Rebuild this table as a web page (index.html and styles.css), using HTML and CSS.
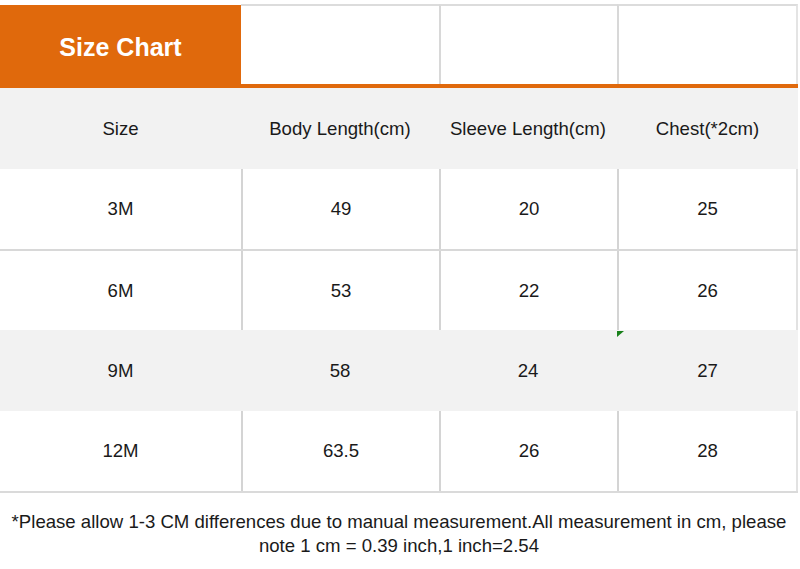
FILE: index.html
```html
<!DOCTYPE html>
<html>
<head>
<meta charset="utf-8">
<link rel="stylesheet" href="styles.css">
</head>
<body>
<div class="chart">
  <div class="row title-row">
    <div class="title">Size Chart</div>
    <div class="blank first"></div>
    <div class="blank"></div>
    <div class="blank last"></div>
  </div>
  <div class="row shade">
    <div class="cell">Size</div>
    <div class="cell">Body Length(cm)</div>
    <div class="cell">Sleeve Length(cm)</div>
    <div class="cell">Chest(*2cm)</div>
  </div>
  <div class="row plain">
    <div class="cell">3M</div>
    <div class="cell">49</div>
    <div class="cell">20</div>
    <div class="cell last">25</div>
  </div>
  <div class="row plain ruled">
    <div class="cell">6M</div>
    <div class="cell">53</div>
    <div class="cell">22</div>
    <div class="cell last">26</div>
  </div>
  <div class="row shade">
    <div class="cell">9M</div>
    <div class="cell">58</div>
    <div class="cell marked">24</div>
    <div class="cell">27</div>
  </div>
  <div class="row plain bottom">
    <div class="cell">12M</div>
    <div class="cell">63.5</div>
    <div class="cell">26</div>
    <div class="cell last">28</div>
  </div>
  <p class="note">*Please allow 1-3 CM differences due to manual measurement.All measurement in cm, please<br>note 1 cm = 0.39 inch,1 inch=2.54</p>
</div>
</body>
</html>
```

FILE: styles.css
```css
html, body {
  margin: 0;
  padding: 0;
  background: #ffffff;
}
body {
  font-family: "Liberation Sans", Arial, sans-serif;
  color: #1a1a1a;
}
.chart {
  width: 798px;
  padding-top: 4px;
}
.row {
  display: grid;
  grid-template-columns: 241px 198px 178px 181px;
}
.title-row {
  height: 80px;
  border-bottom: 4px solid #e0690c;
}
.title {
  background: #e0690c;
  color: #ffffff;
  font-weight: bold;
  font-size: 25px;
  display: flex;
  align-items: center;
  justify-content: center;
  margin-top: 1px;
  padding-top: 6px;
}
.blank {
  border-top: 2px solid #dcdcdc;
  border-left: 2px solid #d8d8d8;
}
.blank.first {
  border-left: none;
}
.blank.last {
  border-right: 2px solid #e4e4e4;
}
.cell {
  display: flex;
  align-items: center;
  justify-content: center;
  font-size: 18.6px;
  height: 80px;
  position: relative;
}
.shade {
  background: #f2f2f2;
}
.shade .cell {
  height: 81px;
}
.plain .cell + .cell {
  border-left: 2px solid #d4d4d4;
}
.plain .cell.last {
  border-right: 2px solid #e2e2e2;
}
.ruled {
  border-top: 2px solid #d8d8d8;
}
.ruled .cell {
  height: 79px;
}
.bottom {
  border-bottom: 2px solid #dadada;
}
.marked::after {
  content: "";
  position: absolute;
  right: -7px;
  top: 1px;
  width: 0;
  height: 0;
  border-top: 6px solid #18801a;
  border-right: 7px solid transparent;
}
.note {
  margin: 0;
  padding-top: 17px;
  text-align: center;
  font-size: 18.6px;
  line-height: 24px;
  color: #1a1a1a;
  width: 798px;
}
```
